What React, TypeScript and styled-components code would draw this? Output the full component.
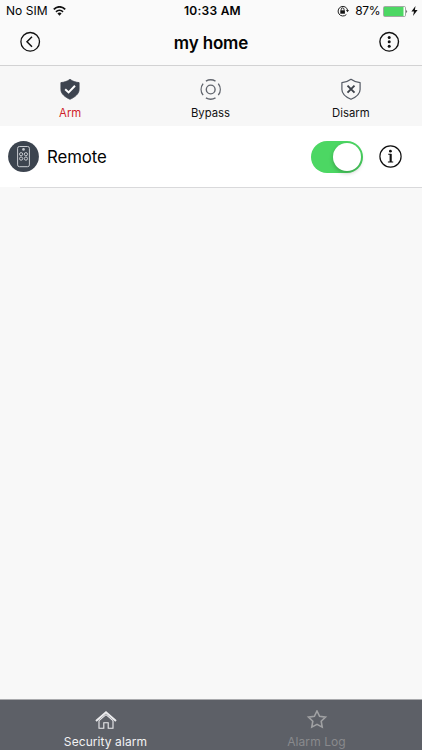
import React from 'react';
import styled, { createGlobalStyle } from 'styled-components';

const GlobalStyle = createGlobalStyle`
  * { box-sizing: border-box; }
  body { margin: 0; background: #f8f8f8; font-family: Inter, Roboto, sans-serif; color: #030303; }
  svg { display: block; flex: none; }
`;

const Screen = styled.main`
  width: 100%;
  height: 100vh;
  min-height: 750px;
  display: flex;
  flex-direction: column;
  background: #f8f8f8;
`;

const StatusBar = styled.div`
  display: grid;
  grid-template-columns: 1fr auto 1fr;
  align-items: center;
  height: 22px;
  padding: 0 4px 0 6px;
  background: #fafafa;
`;

const StatusGroup = styled.div<{ $end?: boolean }>`
  display: flex;
  align-items: center;
  justify-content: ${p => (p.$end ? 'flex-end' : 'flex-start')};
`;

const StatusText = styled.span<{ $bold?: boolean; $spacing?: number }>`
  font-size: 12px;
  line-height: 22px;
  font-weight: ${p => (p.$bold ? 600 : 400)};
  padding-left: ${p => (p.$bold ? 1 : 0)}px;
  letter-spacing: ${p => p.$spacing ?? 0}px;
  white-space: nowrap;
`;

const WifiIcon = styled.svg`margin-left: 5px;`;
const BatteryIcon = styled.svg`margin-left: 3px;`;
const LockIcon = styled.svg`margin-right: 6px;`;
const BoltIcon = styled.svg`margin-left: 3px;`;

const NavBar = styled.header`
  display: grid;
  grid-template-columns: 22px 1fr 22px;
  align-items: center;
  height: 44px;
  padding: 0 22px 4px 19px;
  background: #fafafa;
  border-bottom: 1px solid #d2d2d3;
`;

const Title = styled.h1`
  margin: 0;
  padding: 3px 0 0 3px;
  font-size: 17px;
  line-height: 22px;
  font-weight: 600;
  letter-spacing: -0.15px;
  text-align: center;
`;

const IconButton = styled.button`
  display: block;
  padding: 0;
  border: 0;
  background: none;
  color: #111;
`;

const Modes = styled.section`
  display: grid;
  grid-template-columns: repeat(3, 1fr);
  height: 60px;
  padding-right: 1px;
  background: #f7f7f7;
`;

const Mode = styled.button<{ $active?: boolean }>`
  display: flex;
  flex-direction: column;
  align-items: center;
  gap: 5px;
  padding: 12px 0 0;
  border: 0;
  background: none;
  font: 400 11.3px/15px Inter, sans-serif;
  letter-spacing: 0;
  color: ${p => (p.$active ? '#cf1f2a' : '#111')};
`;

const DeviceRow = styled.div`
  display: flex;
  align-items: center;
  height: 61px;
  padding: 0 20px 0 8px;
  background: #fff;
`;

const DeviceName = styled.span`
  flex: 1;
  margin-left: 8px;
  font-size: 16.8px;
  line-height: 22px;
  letter-spacing: -0.1px;
`;

const Toggle = styled.button`
  display: flex;
  justify-content: flex-end;
  width: 52px;
  height: 32px;
  margin-right: 16px;
  padding: 2px;
  border: 0;
  border-radius: 16px;
  background: #4cd763;
`;

const Knob = styled.span`
  width: 28px;
  height: 28px;
  border-radius: 50%;
  background: #fff;
  box-shadow: 0 2px 4px rgba(0, 0, 0, 0.25);
`;

const Divider = styled.div`
  height: 1px;
  margin-left: 20px;
  background: #d9d9db;
`;

const Spacer = styled.div`flex: 1;`;

const TabBar = styled.nav`
  display: grid;
  grid-template-columns: 1fr 1fr;
  height: 51px;
  background: #5d6067;
  border-top: 1px solid #a9aaad;
`;

const Tab = styled.button<{ $active?: boolean }>`
  display: flex;
  flex-direction: column;
  align-items: center;
  gap: 4px;
  padding: 10px 0 0;
  border: 0;
  background: none;
  font: 400 12px/16px Inter, sans-serif;
  letter-spacing: 0.08px;
  color: ${p => (p.$active ? '#f2f2f3' : '#898a8d')};
`;

const shield = 'M11 1.3C8.2 3.5 5 4.3 1.9 4.6V11.5C1.9 16 6.4 19.3 11 21.3C15.6 19.3 20.1 16 20.1 11.5V4.6C17 4.3 13.8 3.5 11 1.3Z';

export default function App() {
  return (
    <Screen>
      <GlobalStyle />
      <StatusBar>
        <StatusGroup>
          <StatusText $spacing={0.05}>No SIM</StatusText>
          <WifiIcon width="13" height="10" viewBox="0 0 13 10" fill="none" stroke="#111" strokeWidth="1.7">
            <path d="M.8 3.4C4-.1 9-.1 12.2 3.4M3 5.8C5 3.7 8 3.7 10 5.8" />
            <path d="M6.5 9.7L4.4 7.4C5.6 6.3 7.4 6.3 8.6 7.4Z" fill="#111" stroke="none" />
          </WifiIcon>
        </StatusGroup>
        <StatusText $bold $spacing={0.25}>10:33 AM</StatusText>
        <StatusGroup $end>
          <LockIcon width="12" height="12" viewBox="0 0 12 12" fill="none" stroke="#222">
            <path d="M9.4 9.5A4.8 4.8 0 1 1 10.6 5.2" />
            <path d="M8.9 5H12L10.5 7.2Z" fill="#222" stroke="none" />
            <rect x="3.3" y="5.3" width="4.6" height="3.4" fill="#111" stroke="none" />
            <path d="M4.2 5.5V4.3C4.2 2.4 7 2.4 7 4.3V5.5" />
          </LockIcon>
          <StatusText $spacing={-0.45}>87%</StatusText>
          <BatteryIcon width="25" height="11" viewBox="0 0 25 11">
            <rect x=".5" y=".5" width="22" height="10" rx="1.2" fill="#fff" stroke="#8a938b" strokeWidth=".8" />
            <rect x="1" y="1" width="19.5" height="9" fill="#4cd763" />
            <path d="M23.4 3.7Q25 5.5 23.4 7.3Z" fill="#222" />
          </BatteryIcon>
          <BoltIcon width="7" height="10" viewBox="0 0 7 10" fill="#111">
            <path d="M4.5 0L.4 5.5H3L2 10L6.6 4.1H3.9Z" />
          </BoltIcon>
        </StatusGroup>
      </StatusBar>

      <NavBar>
        <IconButton aria-label="Back">
          <svg width="22" height="22" viewBox="0 0 22 22" fill="none" stroke="currentColor" strokeWidth="1.3">
            <circle cx="11.2" cy="10.8" r="9.3" />
            <path d="M13 5.8L8 10.8L13 15.8" strokeWidth="1.5" />
          </svg>
        </IconButton>
        <Title>my home</Title>
        <IconButton aria-label="More">
          <svg width="22" height="22" viewBox="0 0 22 22" fill="currentColor">
            <circle cx="11.2" cy="10.8" r="9.3" fill="none" stroke="currentColor" strokeWidth="1.4" />
            <circle cx="11.2" cy="6.4" r="1.5" />
            <circle cx="11.2" cy="10.8" r="1.5" />
            <circle cx="11.2" cy="15.2" r="1.5" />
          </svg>
        </IconButton>
      </NavBar>

      <Modes>
        <Mode $active>
          <svg width="22" height="23" viewBox="0 0 22 23" fill="none">
            <path d={shield} fill="#3d444f" stroke="#3d444f" strokeWidth=".8" strokeLinejoin="round" />
            <path d="M6.2 11.2L9.6 14.4L16 7.8" stroke="#fff" strokeWidth="2" />
          </svg>
          Arm
        </Mode>
        <Mode>
          <svg width="22" height="23" viewBox="-0.7 0 22 23" fill="none" stroke="#62666e" strokeWidth="1.4">
            <circle cx="11" cy="11.5" r="4.4" />
            <path d="M6.2 3.2A9.6 9.6 0 0 1 15.8 3.2M6.2 19.8A9.6 9.6 0 0 0 15.8 19.8M3.4 5.6A9.6 9.6 0 0 0 3.4 17.2M18.6 5.6A9.6 9.6 0 0 1 18.6 17.2" />
          </svg>
          Bypass
        </Mode>
        <Mode>
          <svg width="22" height="23" viewBox="0 0 22 23" fill="none">
            <path d={shield} stroke="#555b65" strokeWidth="1.2" strokeLinejoin="round" />
            <path d="M7.5 7.7L14.5 14.7M14.5 7.7L7.5 14.7" stroke="#3d424a" strokeWidth="1.9" />
          </svg>
          Disarm
        </Mode>
      </Modes>

      <DeviceRow>
        <svg width="31" height="31" viewBox="0 0 31 31" fill="none" stroke="#c9ccd1">
          <circle cx="15.5" cy="15.5" r="15.4" fill="#3c444f" stroke="none" />
          <rect x="9.6" y="5.5" width="11.8" height="20.2" rx="1.8" />
          <circle cx="15.5" cy="8.4" r="1.3" fill="#c9ccd1" stroke="none" />
          <circle cx="13.1" cy="13.2" r="1.6" />
          <circle cx="17.9" cy="13.2" r="1.6" />
          <circle cx="13.1" cy="17.6" r="1.6" />
          <circle cx="17.9" cy="17.6" r="1.6" />
        </svg>
        <DeviceName>Remote</DeviceName>
        <Toggle role="switch" aria-checked="true" aria-label="Remote">
          <Knob />
        </Toggle>
        <IconButton aria-label="Device information">
          <svg width="23" height="23" viewBox="0 0 23 23" fill="none" stroke="currentColor">
            <circle cx="11.5" cy="11.5" r="10.6" strokeWidth="1.2" />
            <circle cx="11.4" cy="6.2" r="1.4" fill="currentColor" stroke="none" />
            <path d="M9.2 9.3H11.8V16.5M8.9 17H14.2" strokeWidth="1.1" />
            <path d="M11.6 9V17" strokeWidth="2" />
          </svg>
        </IconButton>
      </DeviceRow>
      <Divider />
      <Spacer />

      <TabBar>
        <Tab $active>
          <svg width="22" height="20" viewBox="0 0 22 20" fill="none" stroke="#ececee" strokeWidth="1.1">
            <path d="M1 11L11 2.3L21 11" strokeWidth="2" />
            <path d="M4 10.7V18.3H8.8V12.8H13.2V18.3H18V10.7M4 10.7L11 4.7L18 10.7" />
          </svg>
          Security alarm
        </Tab>
        <Tab>
          <svg width="22" height="20" viewBox="0 0 22 20" fill="none" stroke="#a0a1a3" strokeWidth="1.6">
            <path d="M11 1L13.6 6.3L19.5 7.1L15.2 11.2L16.2 17.1L11 14.3L5.8 17.1L6.8 11.2L2.5 7.1L8.4 6.3Z" />
          </svg>
          Alarm Log
        </Tab>
      </TabBar>
    </Screen>
  );
}
